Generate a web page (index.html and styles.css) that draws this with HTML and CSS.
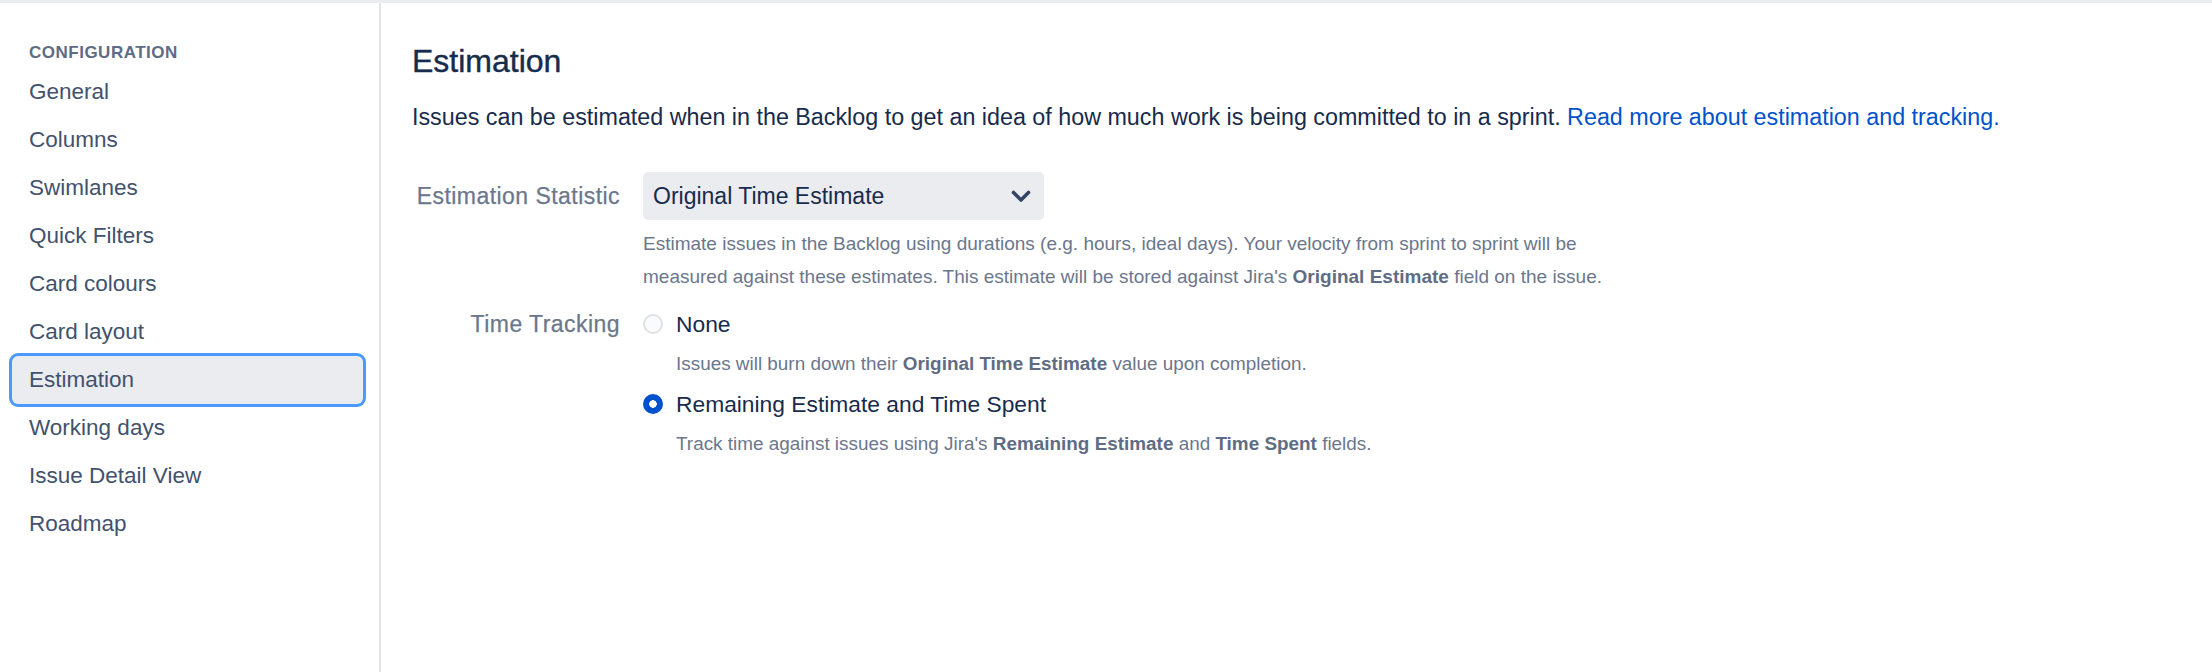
FILE: index.html
```html
<!DOCTYPE html>
<html lang="en">
<head>
<meta charset="utf-8">
<title>Estimation - Board configuration</title>
<link rel="stylesheet" href="styles.css">
</head>
<body>
<div class="topbar"></div>
<div class="layout">
  <aside class="sidebar">
    <div class="section-title">CONFIGURATION</div>
    <nav class="nav">
      <a class="nav-item" href="#">General</a>
      <a class="nav-item" href="#">Columns</a>
      <a class="nav-item" href="#">Swimlanes</a>
      <a class="nav-item" href="#">Quick Filters</a>
      <a class="nav-item" href="#">Card colours</a>
      <a class="nav-item" href="#">Card layout</a>
      <a class="nav-item nav-item-selected" href="#">Estimation</a>
      <a class="nav-item" href="#">Working days</a>
      <a class="nav-item" href="#">Issue Detail View</a>
      <a class="nav-item" href="#">Roadmap</a>
    </nav>
  </aside>
  <main class="content">
    <h1 class="title">Estimation</h1>
    <p class="intro">Issues can be estimated when in the Backlog to get an idea of how much work is being committed to in a sprint. <a class="link" href="#">Read more about estimation and tracking.</a></p>
    <div class="form">
      <div class="field-label label-select">Estimation Statistic</div>
      <div class="field-control">
        <div class="select">
          <span class="select-value">Original Time Estimate</span>
          <svg class="chevron" width="20" height="13" viewBox="0 0 20 13"><path d="M2.5 2.5 L10 10 L17.5 2.5" fill="none" stroke="#344563" stroke-width="3.6" stroke-linecap="round" stroke-linejoin="round"/></svg>
        </div>
        <p class="help help-select">Estimate issues in the Backlog using durations (e.g. hours, ideal days). Your velocity from sprint to sprint will be measured against these estimates. This estimate will be stored against Jira's <b>Original Estimate</b> field on the issue.</p>
      </div>
      <div class="field-label label-radio">Time Tracking</div>
      <div class="field-control radios">
        <label class="radio">
          <span class="radio-circle"></span>
          <span class="radio-text">None</span>
        </label>
        <p class="help help-radio">Issues will burn down their <b>Original Time Estimate</b> value upon completion.</p>
        <label class="radio">
          <span class="radio-circle radio-checked"></span>
          <span class="radio-text">Remaining Estimate and Time Spent</span>
        </label>
        <p class="help help-radio">Track time against issues using Jira's <b>Remaining Estimate</b> and <b>Time Spent</b> fields.</p>
      </div>
    </div>
  </main>
</div>
</body>
</html>
```
FILE: styles.css
```css
* { box-sizing: border-box; }
html, body {
  margin: 0;
  padding: 0;
  background: #ffffff;
  font-family: "Liberation Sans", Arial, sans-serif;
  color: #172b4d;
}
.topbar {
  height: 3px;
  background: #ebecf0;
}
.layout {
  display: flex;
  min-height: 669px;
}
.sidebar {
  width: 381px;
  flex: none;
  border-right: 2px solid #e4e5e8;
  padding: 38px 16px 0 12px;
}
.section-title {
  font-size: 17px;
  line-height: 24px;
  font-weight: 700;
  letter-spacing: 0.5px;
  color: #5e6c84;
  padding-left: 17px;
  margin-bottom: 3px;
}
.nav {
  display: flex;
  flex-direction: column;
}
.nav-item {
  display: block;
  height: 48px;
  line-height: 48px;
  font-size: 22.5px;
  color: #42526e;
  text-decoration: none;
  padding-left: 17px;
  border-radius: 5px;
}
.nav-item-selected {
  background: #ebecf0;
  box-shadow: 0 0 0 3px #4c9aff;
  border-radius: 6px;
}
.content {
  flex: 1;
  padding: 38px 31px 0 31px;
}
.title {
  margin: 0 0 20px;
  font-size: 32px;
  line-height: 40px;
  font-weight: 400;
  color: #172b4d;
  -webkit-text-stroke: 0.4px #172b4d;
}
.intro {
  margin: 0;
  font-size: 23.3px;
  line-height: 32px;
  color: #172b4d;
}
.link {
  color: #0052cc;
  text-decoration: none;
}
.form {
  margin-top: 39px;
  display: grid;
  grid-template-columns: 208px 1fr;
  column-gap: 23px;
}
.field-label {
  text-align: right;
  font-size: 23px;
  letter-spacing: 0.45px;
  color: #6b778c;
  white-space: nowrap;
  -webkit-text-stroke: 0.25px #6b778c;
}
.label-select {
  line-height: 48px;
}
.label-radio {
  line-height: 40px;
  margin-top: 11px;
}
.field-control {
  min-width: 0;
}
.select {
  width: 401px;
  height: 48px;
  background: #ebecf0;
  border-radius: 5px;
  display: flex;
  align-items: center;
  justify-content: space-between;
  padding: 0 13px 0 10px;
}
.select-value {
  font-size: 23px;
  color: #172b4d;
}
.chevron {
  display: block;
  flex: none;
}
.help {
  margin: 0;
  font-size: 19px;
  color: #6b778c;
}
.help b {
  font-weight: 700;
  color: #5e6c84;
}
.help-select {
  margin-top: 7px;
  line-height: 33px;
  max-width: 960px;
}
.radios {
  margin-top: 11px;
}
.radio {
  display: flex;
  align-items: center;
  height: 40px;
  gap: 13px;
  cursor: pointer;
}
.radio-circle {
  width: 20px;
  height: 20px;
  border-radius: 50%;
  border: 2px solid #dfe1e6;
  background: #fafbfc;
  flex: none;
}
.radio-checked {
  border: none;
  background: radial-gradient(circle, #ffffff 0 3.5px, #0052cc 4px);
}
.radio-text {
  font-size: 22.8px;
  color: #172b4d;
}
.help-radio {
  line-height: 40px;
  padding-left: 33px;
  font-size: 18.9px;
}
```
